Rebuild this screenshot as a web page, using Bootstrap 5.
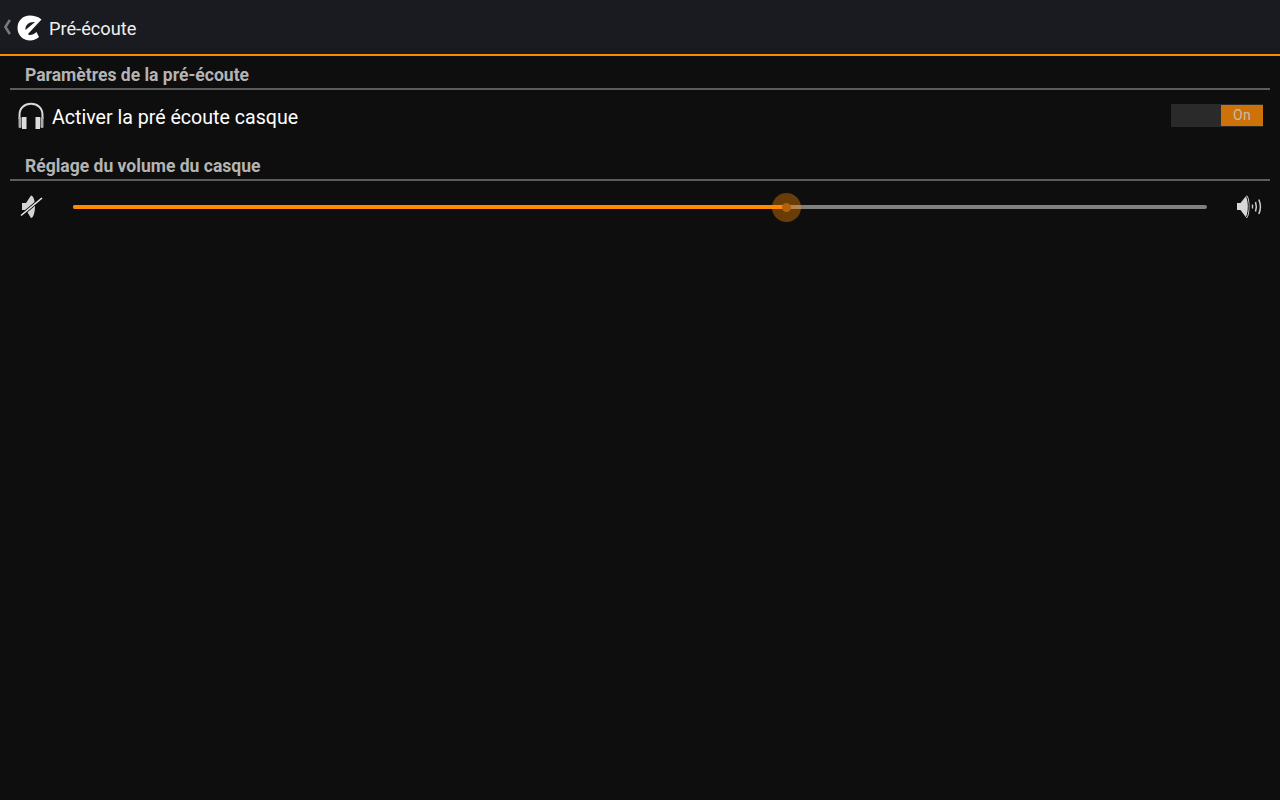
<!DOCTYPE html>
<html lang="fr">
<head>
<meta charset="utf-8">
<title>Pré-écoute</title>
<link rel="stylesheet" href="https://cdn.jsdelivr.net/npm/bootstrap@5.3.0/dist/css/bootstrap.min.css">
<style>
html,body{height:100%;}
body{background:#0e0e0e;font-family:Roboto,"Liberation Sans",sans-serif;color:#fff;overflow:hidden;}
.appbar{height:56px;background:#1a1b20;border-bottom:2px solid #ff8a00;padding-left:2px;}
.appbar-title{font-size:18.2px;color:#f0f0f0;margin-left:7px;line-height:1;margin-top:5px;}
.logo-back{margin-right:5px;}
.logo-e{margin-top:1px;}
.section-head{margin:0 10px;height:34px;border-bottom:2px solid #5c5c5c;padding:0 15px 3px;font-size:17.55px;font-weight:700;color:#b4b4b4;line-height:1;}
.pref-row{margin:0 10px;height:51px;padding:0 7px;}
.pref-label{font-size:19.6px;line-height:1;margin-left:7px;margin-top:4px;color:#fff;}
.sw{width:92px;height:23px;background:#2a2a2a;}
.sw-on{width:42px;height:21px;margin-top:1px;background:#cc7208;color:#c9bda8;font-size:14px;line-height:21px;text-align:center;letter-spacing:.3px;}
.sec2{height:40px;}
.slider-row{height:52px;margin:0 10px;padding:0 8px 0 9px;}
.track{height:4px;background:#808080;border-radius:2px;margin:0 29px 0 30px;}
.track-fill{height:4px;background:#ff8a00;border-radius:2px 0 0 2px;}
.thumb{position:absolute;top:-12.5px;width:29px;height:29px;margin-left:-15px;border-radius:50%;background:rgba(255,138,0,.38);}
.thumb-dot{width:9px;height:9px;border-radius:50%;background:#b06205;}
</style>
</head>
<body>
<header class="appbar d-flex align-items-center">
  <svg class="logo-back" width="10" height="16" viewBox="0 0 10 16"><path d="M7.800 1 L3.400 8 L7.800 15" fill="none" stroke="#77797d" stroke-width="2.500"/></svg>
  <svg class="logo-e" width="25" height="26" viewBox="0 0 25 26"><path d="M24.500 4.500 C21 1.500 17 .5 13 .5 C5.500 .5 .5 6 .5 13 C.5 20 6 25.500 13 25.500 C16.500 25.500 19.500 24 22 22 L19.500 17 C17.500 19 15 20 13 20 C12 20 11.500 19.700 11 19 Z M8.500 15 C8 10 12 6.500 18 7 Z" fill="#fff" fill-rule="evenodd"/></svg>
  <span class="appbar-title">Pré-écoute</span>
</header>
<main>
  <div class="section-head d-flex align-items-end">Paramètres de la pré-écoute</div>
  <div class="pref-row d-flex align-items-center justify-content-between">
    <div class="d-flex align-items-center">
      <svg width="28" height="28" viewBox="0 0 28 28"><path d="M2.500 17 V13 C2.500 6 7.500 1.800 14 1.800 C20.500 1.800 25.500 6 25.500 13 V17" fill="none" stroke="#d8d8d8" stroke-width="2"/><rect x="1.500" y="15" width="3" height="11" rx="1.200" fill="#aaa"/><rect x="5" y="15" width="4.500" height="12" fill="#ddd"/><rect x="18.500" y="15" width="4.500" height="12" fill="#ddd"/><rect x="23.500" y="15" width="3" height="11" rx="1.200" fill="#aaa"/></svg>
      <span class="pref-label">Activer la pré écoute casque</span>
    </div>
    <div class="sw d-flex justify-content-end"><div class="sw-on">On</div></div>
  </div>
  <div class="section-head sec2 d-flex align-items-end">Réglage du volume du casque</div>
  <div class="slider-row d-flex align-items-center">
    <svg width="24" height="26" viewBox="0 0 24 26"><path d="M3 9 H7 L12 1.500 C14.500 1.500 16 7 16 12.500 C16 18 14.500 24 12 24 L7 16 H3 Z" fill="#d4d4d4"/><path d="M2 21.500 L23 4" stroke="#0e0e0e" stroke-width="3.200"/><path d="M2 21.500 L23 4" stroke="#ececec" stroke-width="1.600"/></svg>
    <div class="flex-grow-1 track position-relative">
      <div class="track-fill" style="width:63%"></div>
      <div class="thumb d-flex align-items-center justify-content-center" style="left:63%"><div class="thumb-dot"></div></div>
    </div>
    <svg width="26" height="26" viewBox="0 0 26 26"><path d="M1 9 H4.500 L10.500 1.500 C12.500 1.500 13.500 7 13.500 12.500 C13.500 18 12.500 24 10.500 24 L4.500 16 H1 Z" fill="#d8d8d8"/><path d="M10.500 2.500 C11.800 6 12.300 9 12.300 12.500 C12.300 16 11.800 19.500 10.500 23" fill="none" stroke="#0e0e0e" stroke-width="1"/><path d="M16.500 10.500 V14.500" fill="none" stroke="#ccc" stroke-width="1.400"/><path d="M19.500 8 C20.500 11 20.500 14.500 19.500 17.500" fill="none" stroke="#ccc" stroke-width="1.500"/><path d="M22.800 5.500 C24.800 10 24.800 15.500 22.800 20" fill="none" stroke="#ccc" stroke-width="1.500"/></svg>
  </div>
</main>
<script src="https://cdn.jsdelivr.net/npm/bootstrap@5.3.0/dist/js/bootstrap.bundle.min.js"></script>
</body>
</html>
